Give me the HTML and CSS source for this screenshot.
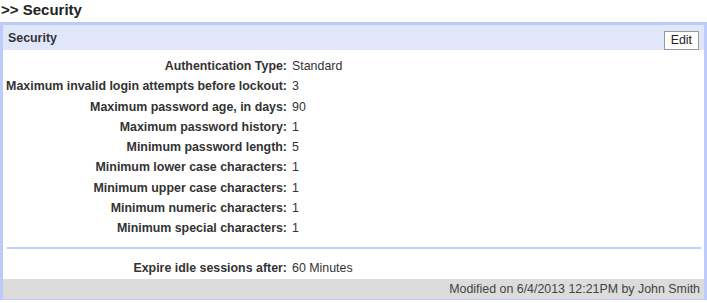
FILE: index.html
```
<!DOCTYPE html>
<html lang="en">
<head>
  <meta charset="UTF-8">
  <title>Security</title>
  <link rel="stylesheet" href="styles.css">
</head>
<body>
  <h1 class="page-title">&gt;&gt; Security</h1>

  <div class="panel">
    <div class="panel-head">
      <span class="panel-title">Security</span>
      <button class="edit">Edit</button>
    </div>

    <dl class="fields">
      <dt>Authentication Type:</dt><dd>Standard</dd>
      <dt>Maximum invalid login attempts before lockout:</dt><dd>3</dd>
      <dt>Maximum password age, in days:</dt><dd>90</dd>
      <dt>Maximum password history:</dt><dd>1</dd>
      <dt>Minimum password length:</dt><dd>5</dd>
      <dt>Minimum lower case characters:</dt><dd>1</dd>
      <dt>Minimum upper case characters:</dt><dd>1</dd>
      <dt>Minimum numeric characters:</dt><dd>1</dd>
      <dt>Minimum special characters:</dt><dd>1</dd>
    </dl>

    <hr class="sep">

    <dl class="fields fields-last">
      <dt>Expire idle sessions after:</dt><dd>60 Minutes</dd>
    </dl>

    <div class="panel-foot">Modified on 6/4/2013 12:21PM by John Smith</div>
  </div>
</body>
</html>
```

FILE: styles.css
```
* {
  margin: 0;
  padding: 0;
  box-sizing: border-box;
}
body {
  font-family: "Liberation Sans", Arial, sans-serif;
  font-size: 12.4px;
  color: #333;
  background: #fff;
}
.page-title {
  font-size: 15px;
  font-weight: bold;
  color: #222;
  height: 22px;
  line-height: 20px;
  padding-left: 1px;
}
.panel {
  width: 707px;
  height: 278px;
  border: 3px solid #bccbfa;
  display: flex;
  flex-direction: column;
}
.panel-head {
  display: flex;
  justify-content: space-between;
  align-items: center;
  flex: 0 0 25px;
  background: #e1e7fb;
  padding: 1px 5px 0 5px;
}
.panel-title {
  font-weight: bold;
  color: #333;
}
.edit {
  font-family: "Liberation Sans", Arial, sans-serif;
  font-size: 12.4px;
  color: #222;
  background: #fff;
  border: 1px solid #999;
  height: 19px;
  padding: 0 6px;
  margin-top: 4px;
}
.fields {
  display: grid;
  grid-template-columns: 284px 1fr;
  column-gap: 5px;
  line-height: 20.25px;
  padding-top: 6px;
}
.fields dt {
  font-weight: bold;
  text-align: right;
}
.sep {
  border: none;
  border-top: 2px solid #c3cffa;
  margin: 9px 3px 0 4px;
}
.fields-last {
  padding-top: 9px;
}
.panel-foot {
  margin-top: auto;
  flex: 0 0 20px;
  line-height: 20px;
  background: #dcdcdc;
  text-align: right;
  padding-right: 4px;
  color: #444;
}
```
